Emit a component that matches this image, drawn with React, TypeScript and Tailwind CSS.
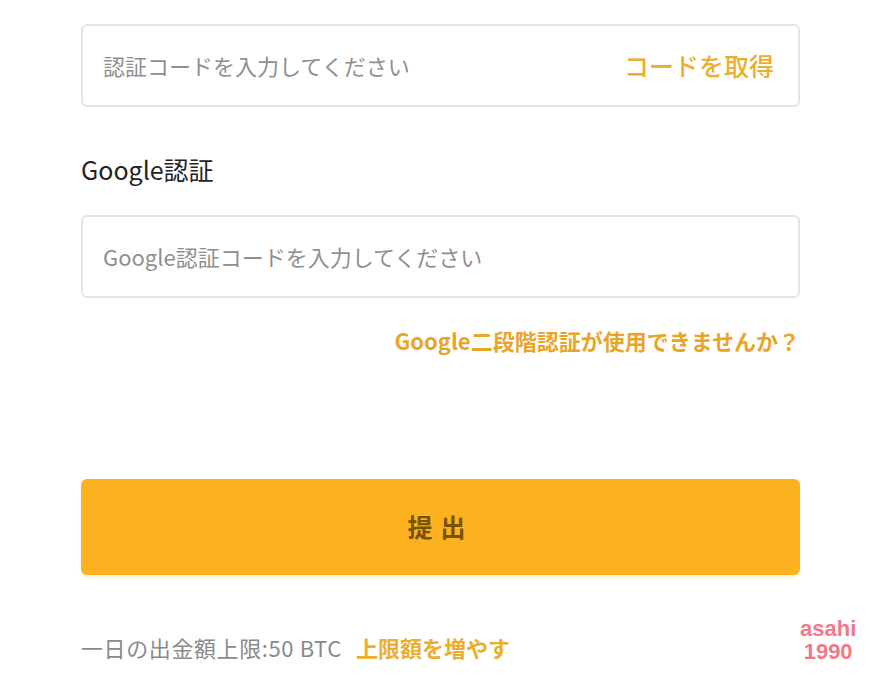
const font = "font-['Noto_Sans_CJK_JP','Noto_Sans',sans-serif]";

function CodeInput({ placeholder, action }: { placeholder: string; action?: string }) {
  return (
    <div className="flex h-[83px] items-center justify-between rounded-[6px] border-2 border-[#e4e4e4] bg-white pl-[20px] pr-[24px]">
      <span className="text-[22px] text-[#8f8f8f]">{placeholder}</span>
      {action && <span className="text-[25px] font-medium text-[#ebae2f]">{action}</span>}
    </div>
  );
}

export default function App() {
  return (
    <div className={`${font} relative h-[690px] w-[870px] bg-white`}>
      <div className="w-[800px] pl-[81px] pt-[24px]">
        <CodeInput placeholder="認証コードを入力してください" action="コードを取得" />

        <p className="mt-[46px] text-[25px] leading-[32px] text-[#232323]">Google認証</p>

        <div className="mt-[30px]">
          <CodeInput placeholder="Google認証コードを入力してください" />
        </div>

        <p className="mt-[28px] text-right text-[22px] font-bold leading-[28px] text-[#e8a527]">
          Google二段階認証が使用できませんか？
        </p>

        <button className="mt-[125px] flex h-[96px] w-full items-center justify-center rounded-[6px] bg-[#fcb11e] text-[25px] font-bold tracking-[8px] text-[#7a5206] shadow-[0_2px_3px_rgba(240,200,120,0.35)]">
          提出
        </button>

        <div className="mt-[57px] flex items-center gap-[14px] text-[22px] leading-[30px]">
          <span className="tracking-[0.6px] text-[#8a8a8a]">一日の出金額上限:50 BTC</span>
          <span className="font-bold text-[#ebae2f]">上限額を増やす</span>
        </div>
      </div>

      <div className="absolute left-[800px] top-[617px] flex flex-col items-center font-['Liberation_Sans',sans-serif] text-[22px] font-bold leading-[23px] text-[#f2798a]">
        <span>asahi</span>
        <span>1990</span>
      </div>
    </div>
  );
}
